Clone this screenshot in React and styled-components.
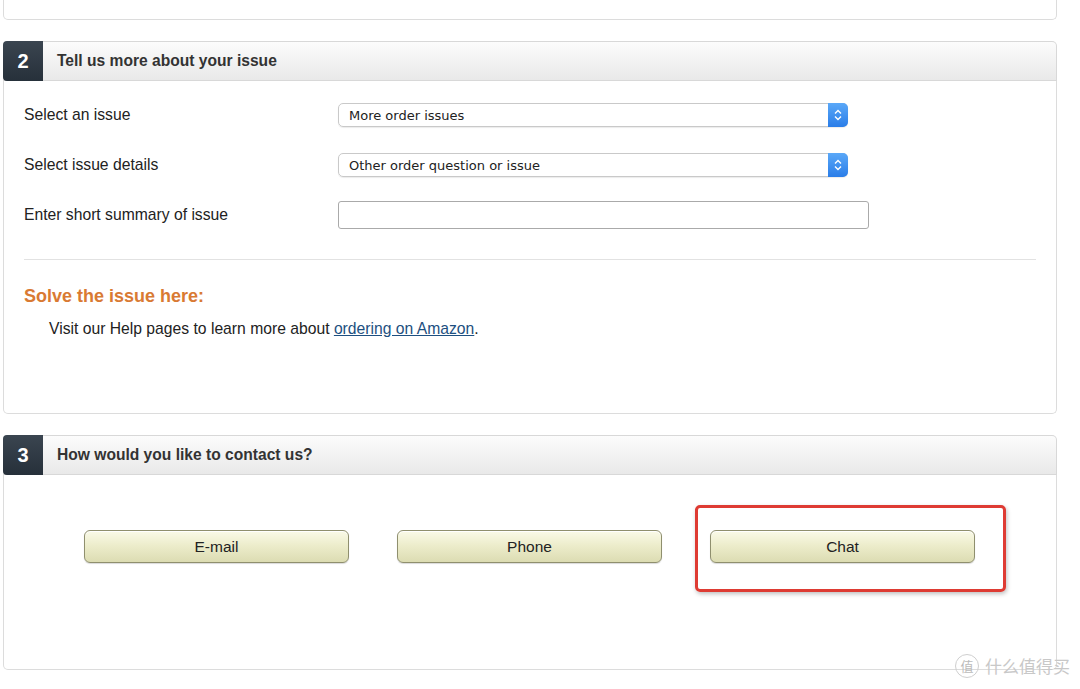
import styled, { createGlobalStyle } from "styled-components";

const GlobalStyle = createGlobalStyle`
  body {
    margin: 0;
    background: #fff;
    font-family: "Liberation Sans", Arial, sans-serif;
    color: #222;
  }
`;

const App = () => {
  return (
    <Page>
      <GlobalStyle />
      <TopStub />
      <Panel>
        <PanelHeader>
          <StepNumber>2</StepNumber>
          <HeaderTitle>Tell us more about your issue</HeaderTitle>
        </PanelHeader>
        <PanelBody $pad="9px 20px 0 20px" $height="333px">
          <FormRow>
            <Label>Select an issue</Label>
            <Select>
              <span>More order issues</span>
              <SelectArrow />
            </Select>
          </FormRow>
          <FormRow>
            <Label>Select issue details</Label>
            <Select>
              <span>Other order question or issue</span>
              <SelectArrow />
            </Select>
          </FormRow>
          <FormRow>
            <Label>Enter short summary of issue</Label>
            <TextInput />
          </FormRow>
          <Divider />
          <SolveTitle>Solve the issue here:</SolveTitle>
          <HelpText>
            Visit our Help pages to learn more about{" "}
            <HelpLink href="#">ordering on Amazon</HelpLink>.
          </HelpText>
        </PanelBody>
      </Panel>
      <Panel>
        <PanelHeader>
          <StepNumber>3</StepNumber>
          <HeaderTitle>How would you like to contact us?</HeaderTitle>
        </PanelHeader>
        <PanelBody $pad="55px 0 0 80px" $height="195px">
          <ButtonRow>
            <ContactButton>E-mail</ContactButton>
            <ContactButton>Phone</ContactButton>
            <Highlighted>
              <ContactButton>Chat</ContactButton>
              <RedFrame />
            </Highlighted>
          </ButtonRow>
        </PanelBody>
      </Panel>
      <Watermark>
        <WatermarkBadge>值</WatermarkBadge>
        什么值得买
      </Watermark>
    </Page>
  );
};

const SelectArrow = () => (
  <ArrowBox>
    <svg width="8" height="12" viewBox="0 0 8 12">
      <path d="M1 4.5 L4 1.5 L7 4.5" fill="none" stroke="#fff" strokeWidth="1.4" />
      <path d="M1 7.5 L4 10.5 L7 7.5" fill="none" stroke="#fff" strokeWidth="1.4" />
    </svg>
  </ArrowBox>
);

export default App;

const Page = styled.div`
  position: relative;
  width: 1080px;
  height: 689px;
  overflow: hidden;
  padding: 0 23px 0 3px;
  box-sizing: border-box;
`;

const TopStub = styled.div`
  height: 20px;
  box-sizing: border-box;
  border: 1px solid #dcdcdc;
  border-top: none;
  border-radius: 0 0 5px 5px;
  margin-bottom: 21px;
`;

const Panel = styled.section`
  margin-bottom: 21px;
`;

const PanelHeader = styled.div`
  display: flex;
  align-items: center;
  height: 40px;
  border: 1px solid #d8d8d8;
  border-left: none;
  border-radius: 5px 5px 0 0;
  background: linear-gradient(#fcfcfc, #e9e9e9);
  box-sizing: border-box;
`;

const StepNumber = styled.div`
  width: 40px;
  height: 40px;
  margin: -1px 0;
  display: flex;
  align-items: center;
  justify-content: center;
  background: linear-gradient(#3a4550, #26303a);
  color: #fff;
  font-weight: bold;
  font-size: 20px;
  border-radius: 4px 0 0 4px;
`;

const HeaderTitle = styled.h2`
  margin: 0 0 0 14px;
  font-size: 15.6px;
  font-weight: bold;
  color: #333;
`;

const PanelBody = styled.div`
  height: ${(p) => p.$height};
  box-sizing: border-box;
  padding: ${(p) => p.$pad};
  border: 1px solid #dcdcdc;
  border-top: none;
  border-radius: 0 0 5px 5px;
`;

const FormRow = styled.div`
  display: grid;
  grid-template-columns: 314px auto;
  align-items: center;
  height: 50px;
`;

const Label = styled.label`
  font-size: 15.7px;
  color: #222;
`;

const Select = styled.div`
  position: relative;
  display: flex;
  align-items: center;
  width: 510px;
  height: 24px;
  box-sizing: border-box;
  padding-left: 10px;
  border: 1px solid #c9c9c9;
  border-radius: 5px;
  font-family: "DejaVu Sans", Verdana, sans-serif;
  font-size: 13px;
  color: #222;
  box-shadow: 0 1px 1px rgba(0, 0, 0, 0.08);
`;

const ArrowBox = styled.div`
  position: absolute;
  right: -1px;
  top: -1px;
  width: 20px;
  height: 24px;
  border-radius: 0 5px 5px 0;
  background: linear-gradient(#5aa8f8, #2a7de8);
  display: flex;
  align-items: center;
  justify-content: center;
`;

const TextInput = styled.input`
  width: 531px;
  height: 28px;
  box-sizing: border-box;
  border: 1px solid #aaa;
  border-radius: 3px;
`;

const Divider = styled.hr`
  border: none;
  border-top: 1px solid #e2e2e2;
  margin: 19px 0 0 0;
`;

const SolveTitle = styled.h3`
  margin: 26px 0 0 0;
  font-size: 18px;
  line-height: 21px;
  font-weight: bold;
  color: #d97a33;
`;

const HelpText = styled.p`
  margin: 13px 0 0 25px;
  font-size: 15.7px;
  line-height: 18px;
  color: #222;
`;

const HelpLink = styled.a`
  color: #1d4f80;
  text-decoration: underline;
`;

const ButtonRow = styled.div`
  display: flex;
  gap: 48px;
`;

const ContactButton = styled.button`
  width: 265px;
  height: 33px;
  border: 1px solid #8f8f6e;
  border-radius: 6px;
  background: linear-gradient(#fafae8 0%, #ededcc 45%, #dcdcb2 100%);
  box-shadow: inset 0 1px 0 #fff, 0 1px 1px rgba(0, 0, 0, 0.15);
  font-family: "Liberation Sans", Arial, sans-serif;
  font-size: 15.5px;
  color: #222;
`;

const Highlighted = styled.div`
  position: relative;
`;

const RedFrame = styled.div`
  position: absolute;
  left: -15px;
  top: -25px;
  width: 311px;
  height: 87px;
  box-sizing: border-box;
  border: 3px solid #de3b33;
  border-radius: 5px;
  box-shadow: 1px 2px 4px rgba(0, 0, 0, 0.25);
`;

const Watermark = styled.div`
  position: absolute;
  right: 10px;
  bottom: 11px;
  display: flex;
  align-items: center;
  gap: 6px;
  font-family: "Noto Sans CJK SC", sans-serif;
  font-size: 17px;
  color: #c8c8c8;
`;

const WatermarkBadge = styled.span`
  display: inline-flex;
  align-items: center;
  justify-content: center;
  width: 22px;
  height: 22px;
  border: 1px solid #cfcfcf;
  border-radius: 50%;
  font-size: 13px;
  color: #bbb;
`;
